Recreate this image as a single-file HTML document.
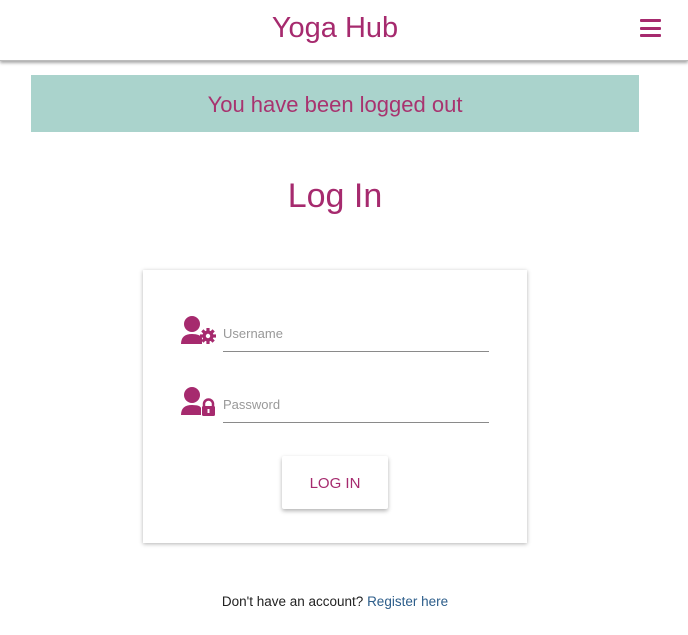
<!DOCTYPE html>
<html><head><meta charset="utf-8">
<style>
html,body{margin:0;padding:0;background:#fff;width:688px;height:635px;overflow:hidden;font-family:"Liberation Sans","DejaVu Sans",sans-serif;}
.hdr{position:absolute;left:0;top:0;width:688px;height:60px;background:#fff;box-shadow:0 2px 3px rgba(0,0,0,0.35);border-bottom:1px solid #bbb;}
.hdr h1{margin:0;position:absolute;left:0;width:670px;top:12px;text-align:center;font-weight:normal;font-size:29px;color:#a62a6e;}
.burger{position:absolute;left:640px;top:19px;width:21px;}
.burger div{height:3px;background:#a62a6e;margin-bottom:4.5px;border-radius:1px}
.banner{position:absolute;left:31px;top:75px;width:608px;height:57px;background:#aad3cc;color:#a8336f;font-size:22px;text-align:center;line-height:60px;}
.title{position:absolute;left:0;width:670px;top:177px;text-align:center;font-size:34px;color:#a62a6e;}
.card{position:absolute;left:143px;top:270px;width:384px;height:273px;background:#fff;box-shadow:0 1px 4px rgba(0,0,0,0.3);}
.ico{position:absolute;}
.field{position:absolute;left:80px;width:266px;border-bottom:1px solid #8a8a8a;color:#999;font-size:13px;height:30px;line-height:26px;}
.btn{position:absolute;left:139px;top:186px;width:106px;height:53px;box-shadow:0 2px 4px rgba(0,0,0,0.3);border-radius:2px;color:#a62a6e;font-size:15px;text-align:center;line-height:55px;background:#fff;}
.foot{position:absolute;left:0;width:670px;top:594px;text-align:center;font-size:13.5px;color:#222;}
.foot span{color:#2c5d8a}
</style></head><body>
<div class="hdr"><h1>Yoga Hub</h1>
<div class="burger"><div></div><div></div><div></div></div></div>
<div class="banner">You have been logged out</div>
<div class="title">Log In</div>
<div class="card">
<svg class="ico" style="left:37px;top:45px" width="38" height="32" viewBox="0 0 38 32">
<circle cx="12" cy="9" r="8" fill="#a62a6e"/>
<path d="M1 29 Q1 19 12 19 Q20 19 22 23 L22 29 Z" fill="#a62a6e"/>
<g transform="translate(28,21)" fill="#a62a6e"><circle r="5.5"/>
<rect x="-1.6" y="-8" width="3.2" height="16"/><rect x="-8" y="-1.6" width="16" height="3.2"/>
<rect x="-1.6" y="-8" width="3.2" height="16" transform="rotate(45)"/><rect x="-1.6" y="-8" width="3.2" height="16" transform="rotate(-45)"/>
<circle r="2.2" fill="#fff"/></g></svg>
<div class="field" style="top:51px">Username</div>
<svg class="ico" style="left:37px;top:116px" width="38" height="32" viewBox="0 0 38 32">
<circle cx="12" cy="9" r="8" fill="#a62a6e"/>
<path d="M1 29 Q1 19 12 19 Q20 19 21 22 L21 29 Z" fill="#a62a6e"/>
<path d="M24 21 V18 A4.5 4.5 0 0 1 33 18 V21" stroke="#a62a6e" stroke-width="2.5" fill="none"/>
<rect x="22" y="20" width="13" height="10" rx="1.5" fill="#a62a6e"/>
<rect x="27.5" y="23" width="2" height="4" fill="#fff"/></svg>
<div class="field" style="top:122px">Password</div>
<div class="btn">LOG IN</div>
</div>
<div class="foot">Don't have an account? <span>Register here</span></div>
</body></html>
